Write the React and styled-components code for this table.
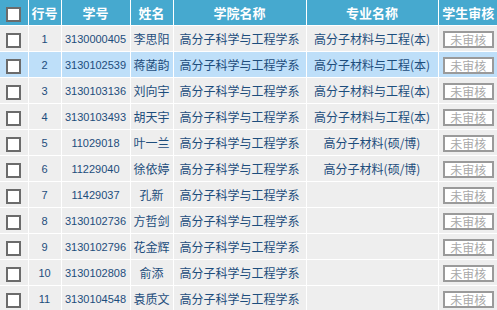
import React from "react";
import styled, { createGlobalStyle } from "styled-components";

const GlobalStyle = createGlobalStyle`
    html, body {
        margin: 0;
        padding: 0;
        background: #fff;
    }
    body {
        font-family: "Noto Sans CJK SC", "Liberation Sans", sans-serif;
    }
`

const rows = [
    { no: 1, id: '3130000405', name: '李思阳', school: '高分子科学与工程学系', major: '高分子材料与工程(本)' },
    { no: 2, id: '3130102539', name: '蒋菡韵', school: '高分子科学与工程学系', major: '高分子材料与工程(本)', active: true },
    { no: 3, id: '3130103136', name: '刘向宇', school: '高分子科学与工程学系', major: '高分子材料与工程(本)' },
    { no: 4, id: '3130103493', name: '胡天宇', school: '高分子科学与工程学系', major: '高分子材料与工程(本)' },
    { no: 5, id: '11029018', name: '叶一兰', school: '高分子科学与工程学系', major: '高分子材料(硕/博)' },
    { no: 6, id: '11229040', name: '徐依婷', school: '高分子科学与工程学系', major: '高分子材料(硕/博)' },
    { no: 7, id: '11429037', name: '孔新', school: '高分子科学与工程学系', major: '' },
    { no: 8, id: '3130102736', name: '方哲剑', school: '高分子科学与工程学系', major: '' },
    { no: 9, id: '3130102796', name: '花金辉', school: '高分子科学与工程学系', major: '' },
    { no: 10, id: '3130102808', name: '俞添', school: '高分子科学与工程学系', major: '' },
    { no: 11, id: '3130104548', name: '袁质文', school: '高分子科学与工程学系', major: '' },
]

const cols = [27, 32, 68, 42, 132, 131, 59]

export default function App() {
    return (
        <>
            <GlobalStyle />
            <Table>
                <colgroup>
                    {cols.map((w, i) => <col key={i} style={{ width: w + 1 }} />)}
                </colgroup>
                <thead>
                    <tr>
                        <Th><Check /></Th>
                        <Th>行号</Th>
                        <Th>学号</Th>
                        <Th>姓名</Th>
                        <Th>学院名称</Th>
                        <Th>专业名称</Th>
                        <Th $last>学生审核</Th>
                    </tr>
                </thead>
                <tbody>
                    {rows.map((r) => (
                        <Row key={r.no} $active={r.active}>
                            <Td><Check /></Td>
                            <Td $num>{r.no}</Td>
                            <Td $num>{r.id}</Td>
                            <Td>{r.name}</Td>
                            <Td>{r.school}</Td>
                            <Td>{r.major}</Td>
                            <Td $last><AuditButton>未审核</AuditButton></Td>
                        </Row>
                    ))}
                </tbody>
            </Table>
        </>
    )
}

const Table = styled.table`
    width: 497px;
    table-layout: fixed;
    border-collapse: collapse;
    border-spacing: 0;
`

const Th = styled.th`
    height: 25px;
    padding: 0;
    background: #46a9cf;
    color: #fff;
    font-size: 13px;
    font-weight: 700;
    text-align: center;
    border-right: ${(p) => (p.$last ? 'none' : '1px solid #fff')};
    border-bottom: 1px solid #fff;
    white-space: nowrap;
    overflow: hidden;
`

const Row = styled.tr`
    background: ${(p) => (p.$active ? '#bedff9' : '#eeeeee')};
`

const Td = styled.td`
    height: 25px;
    padding: 0;
    text-align: center;
    color: #1d4d7c;
    font-size: ${(p) => (p.$num ? '11px' : '12px')};
    font-family: ${(p) => (p.$num ? '"Liberation Sans", sans-serif' : 'inherit')};
    border-right: ${(p) => (p.$last ? 'none' : '1px solid #fff')};
    border-bottom: 1px solid #fff;
    white-space: nowrap;
    overflow: hidden;
`

const Check = styled.span`
    display: inline-block;
    width: 11px;
    height: 11px;
    border: 2px solid #6b6b6b;
    background: #fff;
    vertical-align: middle;
`

const AuditButton = styled.span`
    display: inline-block;
    box-sizing: border-box;
    width: 51px;
    height: 17px;
    line-height: 13px;
    border: 2px solid #9a9a9a;
    background: #fff;
    color: #a8a8a8;
    font-size: 12px;
    vertical-align: middle;
`
